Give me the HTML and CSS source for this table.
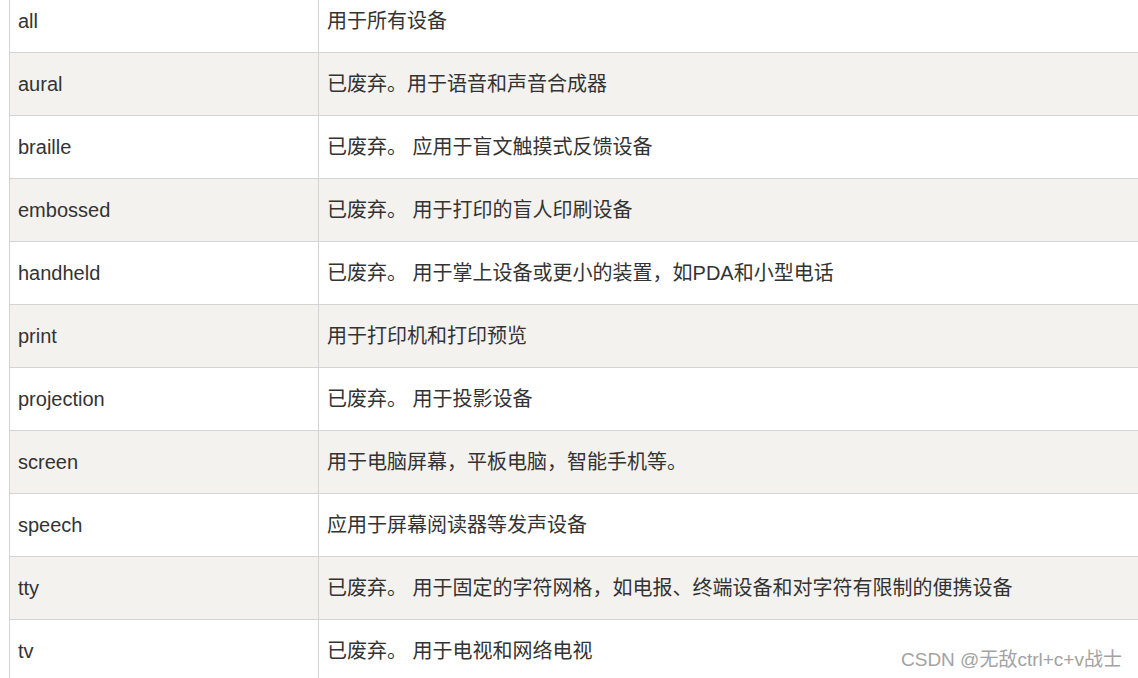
FILE: index.html
```html
<!DOCTYPE html>
<html lang="zh">
<head>
<meta charset="utf-8">
<title>media types</title>
<link rel="stylesheet" href="styles.css">
</head>
<body>
<table class="ref">
  <colgroup><col class="c1"><col class="c2"></colgroup>
  <tbody>
    <tr><td>all</td><td>用于所有设备</td></tr>
    <tr><td>aural</td><td>已废弃。用于语音和声音合成器</td></tr>
    <tr><td>braille</td><td>已废弃。 应用于盲文触摸式反馈设备</td></tr>
    <tr><td>embossed</td><td>已废弃。 用于打印的盲人印刷设备</td></tr>
    <tr><td>handheld</td><td>已废弃。 用于掌上设备或更小的装置，如PDA和小型电话</td></tr>
    <tr><td>print</td><td>用于打印机和打印预览</td></tr>
    <tr><td>projection</td><td>已废弃。 用于投影设备</td></tr>
    <tr><td>screen</td><td>用于电脑屏幕，平板电脑，智能手机等。</td></tr>
    <tr><td>speech</td><td>应用于屏幕阅读器等发声设备</td></tr>
    <tr><td>tty</td><td>已废弃。 用于固定的字符网格，如电报、终端设备和对字符有限制的便携设备</td></tr>
    <tr><td>tv</td><td>已废弃。 用于电视和网络电视</td></tr>
  </tbody>
</table>
<div class="watermark">CSDN @无敌ctrl+c+v战士</div>
</body>
</html>
```

FILE: styles.css
```css
html, body {
  margin: 0;
  padding: 0;
  background: #ffffff;
  overflow: hidden;
  width: 1138px;
  height: 678px;
}
body {
  position: relative;
  font-family: "Liberation Sans", Arial, "Noto Sans CJK SC", sans-serif;
  color: #333333;
}
.ref {
  border-collapse: collapse;
  table-layout: fixed;
  width: 1240px;
  margin: -11px 0 0 9px;
  font-size: 20px;
  line-height: 24px;
}
.c1 { width: 309px; }
.c2 { width: 931px; }
.ref td {
  border: 1px solid #d4d4d4;
  padding: 0 8px;
  height: 63px;
  box-sizing: border-box;
  vertical-align: middle;
  white-space: nowrap;
}
.ref tr:nth-child(even) td {
  background: #f3f2ef;
}
.watermark {
  position: absolute;
  left: 901px;
  top: 648px;
  font-size: 19px;
  line-height: 24px;
  color: #a3a3a3;
  white-space: nowrap;
}
```
